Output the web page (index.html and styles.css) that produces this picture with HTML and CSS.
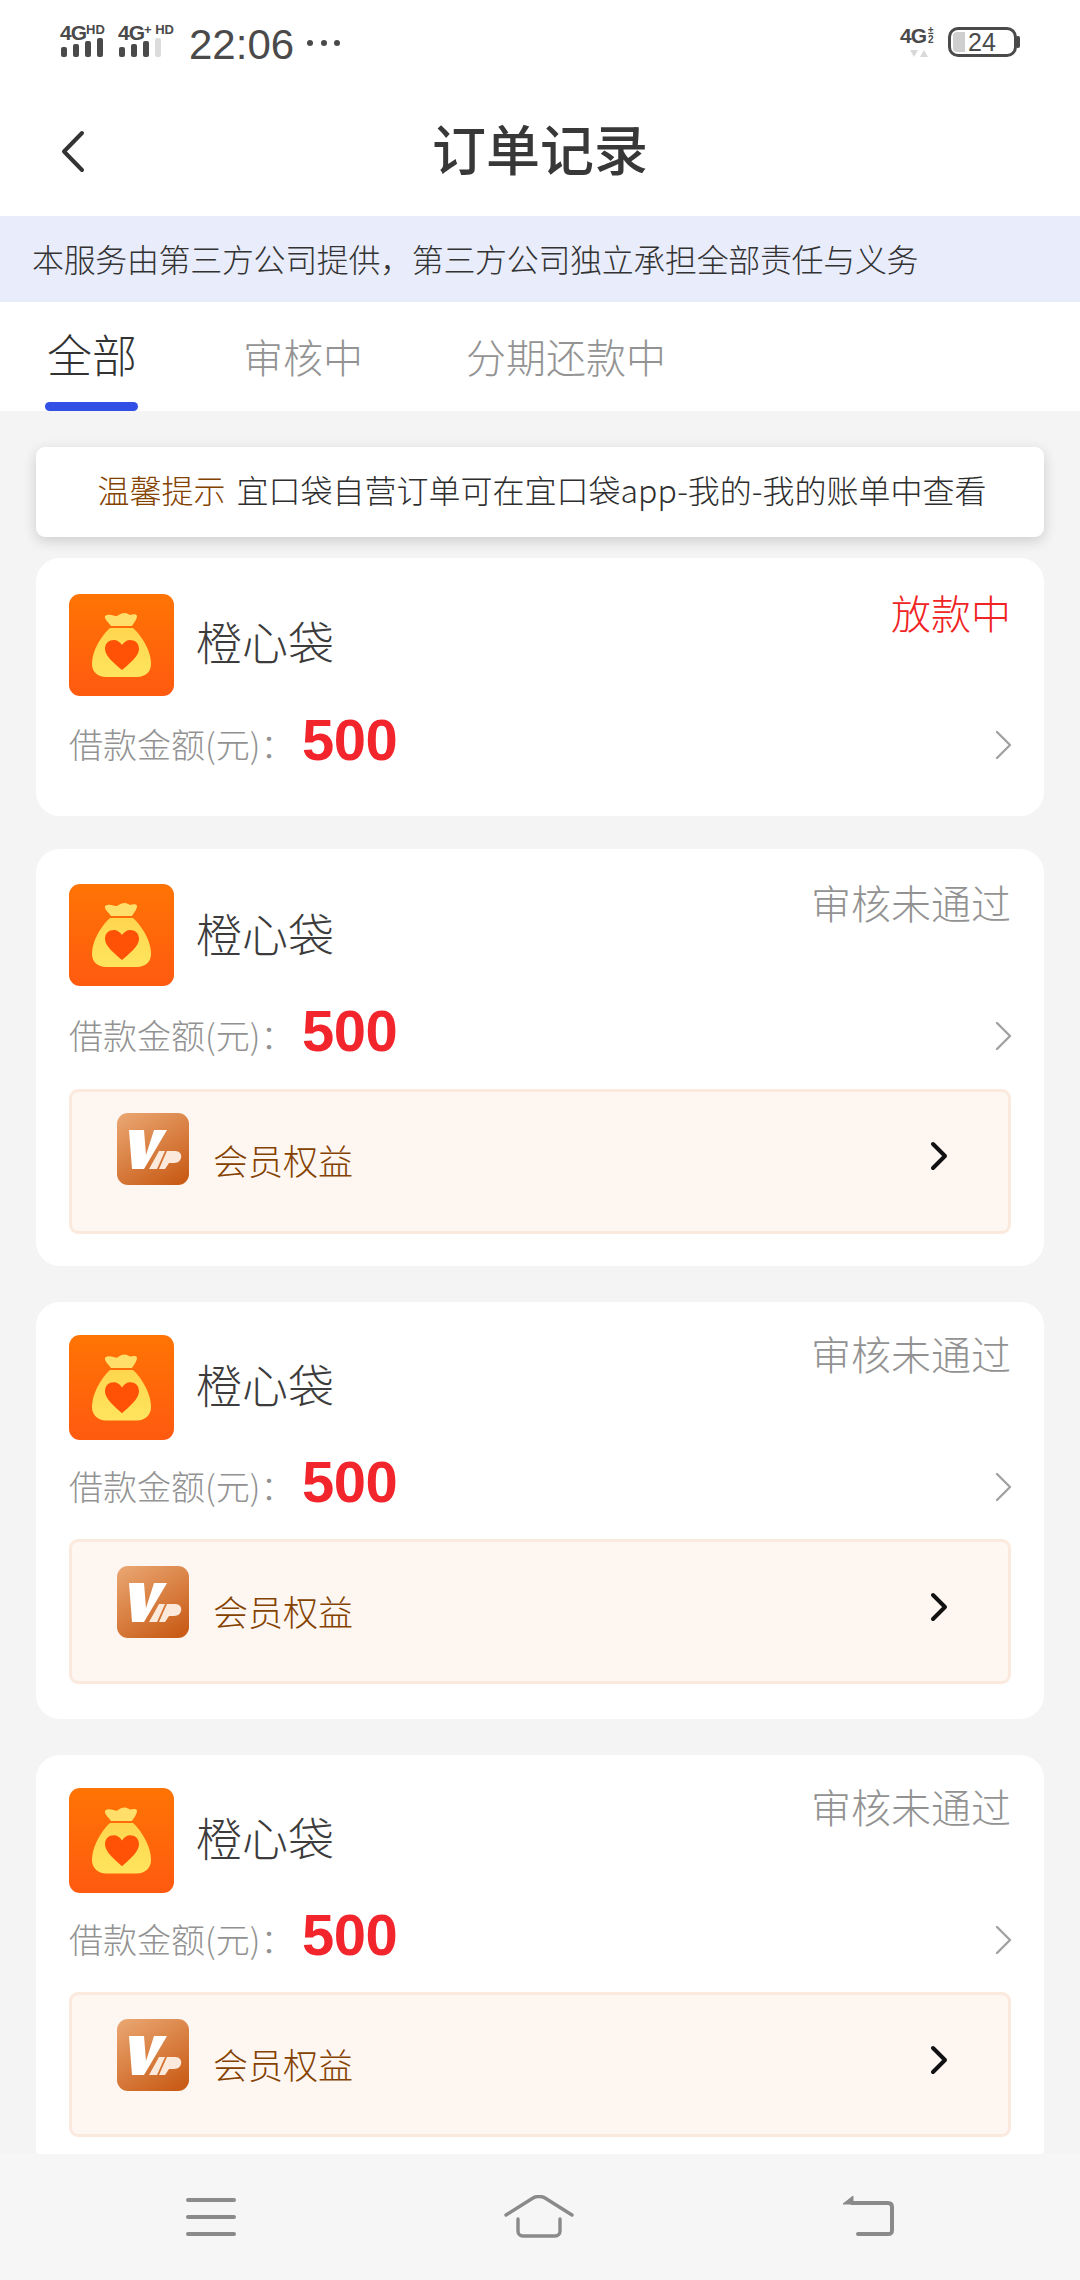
FILE: index.html
```html
<!DOCTYPE html>
<html lang="zh-CN">
<head>
  <meta charset="UTF-8">
  <meta name="viewport" content="width=device-width, initial-scale=1">
  <title>订单记录</title>
  <link rel="stylesheet" href="styles.css">
</head>
<body>
<svg class="defs" width="0" height="0">
  <defs>
    <linearGradient id="appBg" x1="0" y1="0" x2="0" y2="1">
      <stop offset="0" stop-color="#ff7404"/>
      <stop offset="1" stop-color="#ff5a10"/>
    </linearGradient>
    <linearGradient id="bagBg" x1="0" y1="0" x2="0" y2="1">
      <stop offset="0" stop-color="#ffd64e"/>
      <stop offset="1" stop-color="#ffe45e"/>
    </linearGradient>
    <linearGradient id="vipBg" x1="0.2" y1="0" x2="0.8" y2="1">
      <stop offset="0" stop-color="#e8a26c"/>
      <stop offset="1" stop-color="#c95c17"/>
    </linearGradient>
    <symbol id="appIcon" viewBox="0 0 105 102" preserveAspectRatio="none">
      <rect width="105" height="102" rx="11" fill="url(#appBg)"/>
      <path d="M36 22c4-3 9 0 12 0 3-2 5-3 8-3 2 0 3 1 5 2 3-1 7-1 7 1 0 3-3 7-5 10H42c-2-3-7-7-6-10z" fill="#ffdf6a"/>
      <path d="M41 34h23c5 4 18 20 18 36 0 8-6 13-14 13H37c-8 0-14-5-14-13 0-16 13-32 18-36z" fill="url(#bagBg)"/>
      <path d="M53 76C46 70 36 62 36 55c0-6 4-9 9-9 3 0 6 2 8 5 2-3 5-5 8-5 5 0 9 3 9 9 0 7-10 15-17 21z" fill="#ff5207"/>
    </symbol>
    <symbol id="vipIcon" viewBox="0 0 72 72">
      <rect width="72" height="72" rx="11" fill="url(#vipBg)"/>
      <path d="M12 17h15l2 25 8-25h13L27 56H15z" fill="#fff"/>
      <path d="M42 38h6l-8 18h-8zM50 38h8c9 0 8 12-1 12h-5l-4 6h-6z" fill="#fbeadc"/>
    </symbol>
    <symbol id="arrowGrey" viewBox="0 0 20 32">
      <path d="M3 3l13 13L3 29" fill="none" stroke="#a2a2a2" stroke-width="2.4" stroke-linecap="round" stroke-linejoin="round"/>
    </symbol>
    <symbol id="arrowBlack" viewBox="0 0 20 32">
      <path d="M4 4l12 12L4 28" fill="none" stroke="#111" stroke-width="4" stroke-linecap="round" stroke-linejoin="round"/>
    </symbol>
  </defs>
</svg>

<div class="page">
  <div class="statusbar">
    <div class="signals">
      <div class="signal">
        <div class="net">4G<small>HD</small></div>
        <div class="bars"><i class="b1"></i><i class="b2"></i><i class="b3"></i><i class="b4"></i></div>
      </div>
      <div class="signal">
        <div class="net">4G<small>+ HD</small></div>
        <div class="bars"><i class="b1"></i><i class="b2"></i><i class="b3"></i><i class="b4 off"></i></div>
      </div>
      <span class="clock">22:06</span>
      <span class="dots"><i></i><i></i><i></i></span>
    </div>
    <div class="status-right">
      <div class="net-right">
        <div class="net">4G<small class="stack">±<br>2</small></div>
        <div class="updown"><i class="down"></i><i class="up"></i></div>
      </div>
      <div class="battery"><div class="battery-fill"></div><span>24</span></div>
      <div class="battery-cap"></div>
    </div>
  </div>

  <div class="navbar">
    <svg class="back" width="28" height="46" viewBox="0 0 28 46"><path d="M22 5L4 23.5 22 42" fill="none" stroke="#333" stroke-width="4" stroke-linecap="round" stroke-linejoin="round"/></svg>
    <h1>订单记录</h1>
  </div>

  <div class="banner">本服务由第三方公司提供，第三方公司独立承担全部责任与义务</div>

  <div class="tabs">
    <div class="tab active">全部</div>
    <div class="tab">审核中</div>
    <div class="tab">分期还款中</div>
  </div>

  <div class="list">
    <div class="notice"><em>温馨提示</em> 宜口袋自营订单可在宜口袋app-我的-我的账单中查看</div>

    <div class="card card-first">
      <div class="card-head">
        <svg class="app-icon"><use href="#appIcon"/></svg>
        <span class="app-name">橙心袋</span>
        <span class="state state-red">放款中</span>
      </div>
      <div class="amount-row">
        <span class="amount-label">借款金额(元)：</span>
        <span class="amount">500</span>
        <svg class="arrow"><use href="#arrowGrey"/></svg>
      </div>
    </div>

    <div class="card">
      <div class="card-head">
        <svg class="app-icon"><use href="#appIcon"/></svg>
        <span class="app-name">橙心袋</span>
        <span class="state">审核未通过</span>
      </div>
      <div class="amount-row">
        <span class="amount-label">借款金额(元)：</span>
        <span class="amount">500</span>
        <svg class="arrow"><use href="#arrowGrey"/></svg>
      </div>
      <div class="vip">
        <svg class="vip-icon"><use href="#vipIcon"/></svg>
        <span class="vip-text">会员权益</span>
        <svg class="vip-arrow"><use href="#arrowBlack"/></svg>
      </div>
    </div>

    <div class="card card-tight">
      <div class="card-head">
        <svg class="app-icon"><use href="#appIcon"/></svg>
        <span class="app-name">橙心袋</span>
        <span class="state">审核未通过</span>
      </div>
      <div class="amount-row">
        <span class="amount-label">借款金额(元)：</span>
        <span class="amount">500</span>
        <svg class="arrow"><use href="#arrowGrey"/></svg>
      </div>
      <div class="vip">
        <svg class="vip-icon"><use href="#vipIcon"/></svg>
        <span class="vip-text">会员权益</span>
        <svg class="vip-arrow"><use href="#arrowBlack"/></svg>
      </div>
    </div>

    <div class="card card-tight">
      <div class="card-head">
        <svg class="app-icon"><use href="#appIcon"/></svg>
        <span class="app-name">橙心袋</span>
        <span class="state">审核未通过</span>
      </div>
      <div class="amount-row">
        <span class="amount-label">借款金额(元)：</span>
        <span class="amount">500</span>
        <svg class="arrow"><use href="#arrowGrey"/></svg>
      </div>
      <div class="vip">
        <svg class="vip-icon"><use href="#vipIcon"/></svg>
        <span class="vip-text">会员权益</span>
        <svg class="vip-arrow"><use href="#arrowBlack"/></svg>
      </div>
    </div>
  </div>

  <div class="bottombar">
    <svg width="50" height="44" viewBox="0 0 50 44"><path d="M2 5h46M2 22h46M2 39h46" stroke="#8a8a8a" stroke-width="4" stroke-linecap="round"/></svg>
    <svg width="70" height="44" viewBox="0 0 70 44"><path d="M2 20L29 3c3-2 9-2 12 0l27 17M14 24v12c0 3 2 5 5 5h32c3 0 5-2 5-5V24" fill="none" stroke="#8a8a8a" stroke-width="3.4" stroke-linecap="round"/></svg>
    <svg width="52" height="44" viewBox="0 0 52 44"><path d="M10 8h36c3 0 4 2 4 4v23c0 3-1 4-4 4H16" fill="none" stroke="#8a8a8a" stroke-width="4" stroke-linecap="round"/><path d="M1 9L11 1v8z" fill="#8a8a8a" stroke="#8a8a8a" stroke-linejoin="round"/></svg>
  </div>
</div>
</body>
</html>
```

FILE: styles.css
```css
* { box-sizing: border-box; }
body { margin: 0; background: #f4f4f4; font-family: "Noto Sans CJK SC", "Liberation Sans", sans-serif; font-weight: 300; color: #333; }
.defs { position: absolute; }
.page { width: 1080px; height: 2280px; display: flex; flex-direction: column; overflow: hidden; }

.statusbar { height: 80px; flex: none; background: #fff; display: flex; justify-content: space-between; padding: 20px 60px 0 60px; color: #4a4a4a; }
.signals { display: flex; align-items: flex-start; }
.signal { width: 58px; }
.signal + .signal { width: 71px; }
.net { font: bold 21px/20px "Liberation Sans", sans-serif; white-space: nowrap; height: 18px; letter-spacing: -1px; }
.net small { font-size: 13px; vertical-align: 6px; letter-spacing: 0; }
.bars { display: flex; align-items: flex-end; gap: 6px; height: 19px; padding-left: 1px; }
.bars i { width: 6px; background: #4a4a4a; border-radius: 2px; display: block; }
.b1 { height: 10px; } .b2 { height: 13px; } .b3 { height: 16px; } .b4 { height: 19px; }
.bars .off { background: #dcdcdc; }
.clock { font: 42px/46px "Liberation Sans", sans-serif; margin-top: 2px; }
.dots { display: flex; gap: 7.5px; margin-left: 13px; margin-top: 20px; }
.dots i { width: 6px; height: 6px; border-radius: 50%; background: #4a4a4a; display: block; }
.status-right { display: flex; align-items: flex-start; }
.net-right { width: 48px; padding-top: 6px; }
.net-right .net { height: 22px; display: flex; }
.net .stack { font-size: 10px; line-height: 9px; margin-left: 2px; vertical-align: 0; }
.updown { display: flex; gap: 2px; margin: 2px 0 0 10px; }
.updown i { width: 0; height: 0; border-left: 4px solid transparent; border-right: 4px solid transparent; display: block; }
.updown .down { border-top: 7px solid #d8d8d8; }
.updown .up { border-bottom: 7px solid #d8d8d8; }
.battery { width: 69px; height: 30px; border: 3px solid #4a4a4a; border-radius: 10px; margin-top: 7px; display: flex; align-items: center; padding: 2px; }
.battery-fill { width: 12px; height: 20px; background: #cfcfcf; border-radius: 4px 0 0 4px; flex: none; }
.battery span { font: 25px/24px "Liberation Sans", sans-serif; margin-left: 3px; }
.battery-cap { width: 3px; height: 12px; background: #4a4a4a; margin-top: 16px; border-radius: 0 2px 2px 0; }

.navbar { height: 136px; flex: none; background: #fff; display: flex; align-items: center; justify-content: center; position: relative; }
.navbar h1 { margin: 0; font-size: 54px; font-weight: 500; color: #383838; line-height: 1; }
.back { position: absolute; left: 60px; top: 48px; }

.banner { height: 86px; flex: none; background: #e9edfb; color: #333; font-size: 32px; letter-spacing: -0.35px; line-height: 84px; padding-left: 32px; white-space: nowrap; }

.tabs { height: 109px; flex: none; background: #fff; display: flex; padding-left: 47px; }
.tab { font-size: 40px; color: #939393; line-height: 108px; margin-right: 103px; position: relative; }
.tab.active { font-size: 45px; color: #333; line-height: 104px; margin-right: 106px; }
.tab.active::after { content: ""; position: absolute; left: -2px; right: -1px; bottom: 0; height: 9px; background: #3350e6; border-radius: 5px; }

.list { flex: 1; min-height: 0; overflow: hidden; padding: 36px 36px 0; }
.notice { height: 90px; background: #fff; border-radius: 9px; box-shadow: 0 4px 14px rgba(0,0,0,0.16); font-size: 32px; line-height: 84px; padding-left: 4px; text-align: center; white-space: nowrap; color: #2e2e2e; margin-bottom: 21px; }
.notice em { font-style: normal; color: #844200; margin-right: 4px; }

.card { background: #fff; border-radius: 24px; padding: 35px 33px 0; height: 417px; margin-bottom: 36px; }
.card-first { height: 258px; margin-bottom: 33px; padding-top: 36px; }
.card-head { display: flex; align-items: flex-start; height: 114px; }
.card-first .card-head { height: 113px; }
.app-icon { width: 105px; height: 102px; flex: none; }
.card-tight { padding-top: 33px; }
.card-tight .app-icon { height: 105px; }
.app-name { font-size: 46px; line-height: 96px; margin-left: 22px; color: #3c3c3c; }
.card-first .app-name { line-height: 92px; }
.state { margin-left: auto; font-size: 40px; line-height: 36px; color: #929292; }
.state-red { color: #f02424; }
.amount-row { display: flex; align-items: center; height: 72px; margin-bottom: 19px; }
.card-tight .amount-row { margin-bottom: 18px; }
.amount-label { font-size: 34px; color: #929292; width: 233px; white-space: nowrap; }
.amount { font: bold 58px/72px "Liberation Sans", sans-serif; color: #f2252c; margin-top: -6px; letter-spacing: -0.5px; }
.arrow { width: 20px; height: 32px; margin-left: auto; margin-right: -3px; margin-top: 3px; }

.vip { height: 145px; background: #fef6f1; border: 3px solid #fbe9dd; border-radius: 9px; display: flex; align-items: flex-start; padding: 21px 0 0 45px; }
.card-tight .vip { padding-top: 24px; }
.card-tight .vip-text { margin-top: 21px; }
.vip-icon { width: 72px; height: 72px; flex: none; }
.vip-text { font-size: 35px; color: #844200; line-height: 48px; margin: 23px 0 0 24px; }
.vip-arrow { width: 20px; height: 32px; margin-left: auto; margin-right: 59px; margin-top: 27px; }
.card-tight .vip-arrow { margin-top: 25px; }

.bottombar { height: 126px; flex: none; background: #f6f6f6; display: flex; align-items: flex-start; padding: 41px 186px 0; justify-content: space-between; }
```
